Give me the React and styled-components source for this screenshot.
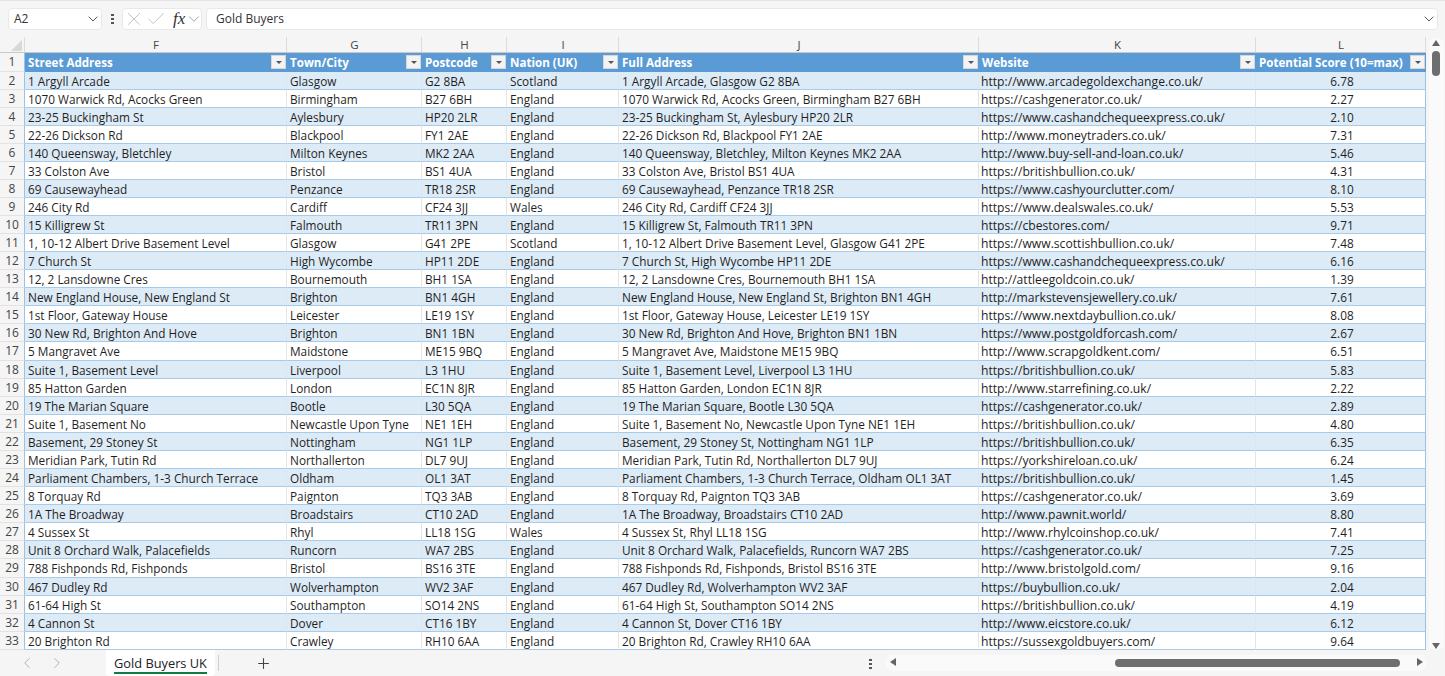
import styled, { createGlobalStyle } from "styled-components";
import { ChevronDown, ChevronLeft, ChevronRight, Check, X, Plus } from "lucide-react";

const GRID_COLS = "262px 135px 85px 112px 360px 277px 170px";
const TALL_ROWS = [1, 17, 29];

const columns = [
  { letter: "F", title: "Street Address" },
  { letter: "G", title: "Town/City" },
  { letter: "H", title: "Postcode" },
  { letter: "I", title: "Nation (UK)" },
  { letter: "J", title: "Full Address" },
  { letter: "K", title: "Website" },
  { letter: "L", title: "Potential Score (10=max)" },
];

const rows = [
  ["1 Argyll Arcade", "Glasgow", "G2 8BA", "Scotland", "1 Argyll Arcade, Glasgow G2 8BA", "http://www.arcadegoldexchange.co.uk/", "6.78"],
  ["1070 Warwick Rd, Acocks Green", "Birmingham", "B27 6BH", "England", "1070 Warwick Rd, Acocks Green, Birmingham B27 6BH", "https://cashgenerator.co.uk/", "2.27"],
  ["23-25 Buckingham St", "Aylesbury", "HP20 2LR", "England", "23-25 Buckingham St, Aylesbury HP20 2LR", "https://www.cashandchequeexpress.co.uk/", "2.10"],
  ["22-26 Dickson Rd", "Blackpool", "FY1 2AE", "England", "22-26 Dickson Rd, Blackpool FY1 2AE", "http://www.moneytraders.co.uk/", "7.31"],
  ["140 Queensway, Bletchley", "Milton Keynes", "MK2 2AA", "England", "140 Queensway, Bletchley, Milton Keynes MK2 2AA", "http://www.buy-sell-and-loan.co.uk/", "5.46"],
  ["33 Colston Ave", "Bristol", "BS1 4UA", "England", "33 Colston Ave, Bristol BS1 4UA", "https://britishbullion.co.uk/", "4.31"],
  ["69 Causewayhead", "Penzance", "TR18 2SR", "England", "69 Causewayhead, Penzance TR18 2SR", "https://www.cashyourclutter.com/", "8.10"],
  ["246 City Rd", "Cardiff", "CF24 3JJ", "Wales", "246 City Rd, Cardiff CF24 3JJ", "https://www.dealswales.co.uk/", "5.53"],
  ["15 Killigrew St", "Falmouth", "TR11 3PN", "England", "15 Killigrew St, Falmouth TR11 3PN", "https://cbestores.com/", "9.71"],
  ["1, 10-12 Albert Drive Basement Level", "Glasgow", "G41 2PE", "Scotland", "1, 10-12 Albert Drive Basement Level, Glasgow G41 2PE", "https://www.scottishbullion.co.uk/", "7.48"],
  ["7 Church St", "High Wycombe", "HP11 2DE", "England", "7 Church St, High Wycombe HP11 2DE", "https://www.cashandchequeexpress.co.uk/", "6.16"],
  ["12, 2 Lansdowne Cres", "Bournemouth", "BH1 1SA", "England", "12, 2 Lansdowne Cres, Bournemouth BH1 1SA", "http://attleegoldcoin.co.uk/", "1.39"],
  ["New England House, New England St", "Brighton", "BN1 4GH", "England", "New England House, New England St, Brighton BN1 4GH", "http://markstevensjewellery.co.uk/", "7.61"],
  ["1st Floor, Gateway House", "Leicester", "LE19 1SY", "England", "1st Floor, Gateway House, Leicester LE19 1SY", "https://www.nextdaybullion.co.uk/", "8.08"],
  ["30 New Rd, Brighton And Hove", "Brighton", "BN1 1BN", "England", "30 New Rd, Brighton And Hove, Brighton BN1 1BN", "https://www.postgoldforcash.com/", "2.67"],
  ["5 Mangravet Ave", "Maidstone", "ME15 9BQ", "England", "5 Mangravet Ave, Maidstone ME15 9BQ", "http://www.scrapgoldkent.com/", "6.51"],
  ["Suite 1, Basement Level", "Liverpool", "L3 1HU", "England", "Suite 1, Basement Level, Liverpool L3 1HU", "https://britishbullion.co.uk/", "5.83"],
  ["85 Hatton Garden", "London", "EC1N 8JR", "England", "85 Hatton Garden, London EC1N 8JR", "http://www.starrefining.co.uk/", "2.22"],
  ["19 The Marian Square", "Bootle", "L30 5QA", "England", "19 The Marian Square, Bootle L30 5QA", "https://cashgenerator.co.uk/", "2.89"],
  ["Suite 1, Basement No", "Newcastle Upon Tyne", "NE1 1EH", "England", "Suite 1, Basement No, Newcastle Upon Tyne NE1 1EH", "https://britishbullion.co.uk/", "4.80"],
  ["Basement, 29 Stoney St", "Nottingham", "NG1 1LP", "England", "Basement, 29 Stoney St, Nottingham NG1 1LP", "https://britishbullion.co.uk/", "6.35"],
  ["Meridian Park, Tutin Rd", "Northallerton", "DL7 9UJ", "England", "Meridian Park, Tutin Rd, Northallerton DL7 9UJ", "https://yorkshireloan.co.uk/", "6.24"],
  ["Parliament Chambers, 1-3 Church Terrace", "Oldham", "OL1 3AT", "England", "Parliament Chambers, 1-3 Church Terrace, Oldham OL1 3AT", "https://britishbullion.co.uk/", "1.45"],
  ["8 Torquay Rd", "Paignton", "TQ3 3AB", "England", "8 Torquay Rd, Paignton TQ3 3AB", "https://cashgenerator.co.uk/", "3.69"],
  ["1A The Broadway", "Broadstairs", "CT10 2AD", "England", "1A The Broadway, Broadstairs CT10 2AD", "http://www.pawnit.world/", "8.80"],
  ["4 Sussex St", "Rhyl", "LL18 1SG", "Wales", "4 Sussex St, Rhyl LL18 1SG", "http://www.rhylcoinshop.co.uk/", "7.41"],
  ["Unit 8 Orchard Walk, Palacefields", "Runcorn", "WA7 2BS", "England", "Unit 8 Orchard Walk, Palacefields, Runcorn WA7 2BS", "https://cashgenerator.co.uk/", "7.25"],
  ["788 Fishponds Rd, Fishponds", "Bristol", "BS16 3TE", "England", "788 Fishponds Rd, Fishponds, Bristol BS16 3TE", "http://www.bristolgold.com/", "9.16"],
  ["467 Dudley Rd", "Wolverhampton", "WV2 3AF", "England", "467 Dudley Rd, Wolverhampton WV2 3AF", "https://buybullion.co.uk/", "2.04"],
  ["61-64 High St", "Southampton", "SO14 2NS", "England", "61-64 High St, Southampton SO14 2NS", "https://britishbullion.co.uk/", "4.19"],
  ["4 Cannon St", "Dover", "CT16 1BY", "England", "4 Cannon St, Dover CT16 1BY", "http://www.eicstore.co.uk/", "6.12"],
  ["20 Brighton Rd", "Crawley", "RH10 6AA", "England", "20 Brighton Rd, Crawley RH10 6AA", "https://sussexgoldbuyers.com/", "9.64"],
];

const GlobalStyle = createGlobalStyle`
  html, body {
    margin: 0;
    padding: 0;
    overflow: hidden;
    background: #f5f5f5;
    font-family: "Open Sans", "Noto Sans", sans-serif;
    color: #222;
  }
  * { box-sizing: border-box; }
`;

const Page = styled.div`
  width: 1445px;
  height: 676px;
  display: flex;
  flex-direction: column;
  overflow: hidden;
`;

const FormulaBar = styled.div`
  height: 37px;
  flex: none;
  display: flex;
  align-items: center;
  gap: 4px;
  padding: 0 7px 1px 8px;
  border-top: 1px solid #e4e4e4;
`;

const Pill = styled.div`
  height: 22px;
  background: #fff;
  border: 1px solid #e8e8e8;
  border-radius: 4px;
  display: flex;
  align-items: center;
  font-size: 12px;
  color: #333;

  svg {
    flex: none;
  }
`;

const NameBox = styled(Pill)`
  width: 94px;
  padding: 0 0 0 5px;
  justify-content: space-between;
`;

const FxBox = styled(Pill)`
  width: 80px;
  color: #bdbdbd;
`;

const FxLabel = styled.span`
  font-family: "Liberation Serif", serif;
  font-style: italic;
  font-size: 17px;
  width: 14px;
  margin-left: 6px;
  color: #333;
`;

const FormulaInput = styled(Pill)`
  flex: 1;
  padding: 0 0 0 9px;
  justify-content: space-between;
`;

const Dots = styled.span`
  width: 3px;
  height: 11px;
  flex: none;
  margin: ${(p) => (p.$bar ? "0 4px 0 5px" : "0 1px")};
  background: radial-gradient(circle, #555 1.2px, transparent 1.4px) 0 0 / 3px 4px repeat-y;
`;

const SheetArea = styled.div`
  flex: 1;
  display: flex;
  min-height: 0;
`;

const GridWrap = styled.div`
  width: 1426px;
  flex: none;
  display: flex;
  flex-direction: column;
  overflow: hidden;
`;

const HeaderRow = styled.div`
  display: grid;
  grid-template-columns: 25px ${GRID_COLS};
  height: 16px;
  flex: none;
  border-bottom: 1px solid #c8c8c8;
`;

const Corner = styled.div`
  position: relative;
  border-right: 1px solid #dcdcdc;
  &::after {
    content: "";
    position: absolute;
    right: 2px;
    bottom: 1px;
    border-style: solid;
    border-width: 0 0 11px 11px;
    border-color: transparent transparent #d8d8d8 transparent;
  }
`;

const ColLetter = styled.div`
  border-right: 1px solid #dcdcdc;
  text-align: center;
  font-size: 11.5px;
  line-height: 15px;
  padding-left: 1px;
  color: #444;
`;

const Row = styled.div`
  display: grid;
  grid-template-columns: 25px ${GRID_COLS};
  grid-template-rows: 100%;
  height: ${(p) => (p.$tall ? 19 : 18)}px;
  flex: none;
`;

const RowNum = styled.div`
  border-right: 1px solid #9bc2e6;
  border-bottom: 1px solid #e2e2e2;
  text-align: center;
  font-size: 12px;
  line-height: 17px;
  color: #444;
`;

const Cell = styled.div`
  background: ${(p) => (p.$band ? "#ddebf7" : "#fff")};
  border-bottom: 1px solid #a9cbea;
  border-right: 1px solid ${(p) => (p.$band ? "#d9e7f3" : "#e4e4e4")};
  padding: 2px 0 0 ${(p) => (p.$link ? 2 : 3)}px;
  font-size: ${(p) => (p.$link ? 12.15 : 11.8)}px;
  line-height: 15px;
  white-space: nowrap;
  overflow: hidden;
  color: #1f1f1f;
  text-align: ${(p) => (p.$center ? "center" : "left")};
  &:last-child {
    border-right: 1px solid #9bc2e6;
  }
`;

const HeadCell = styled.div`
  position: relative;
  background: #5b9bd5;
  color: #fff;
  font-weight: 700;
  font-size: 11.6px;
  line-height: 17px;
  padding: 1px 0 0 3px;
  white-space: nowrap;
  overflow: hidden;
`;

const FilterBtn = styled.span`
  position: absolute;
  right: 1px;
  top: 2px;
  width: 15px;
  height: 14px;
  background: #f3f3f3;
  border: 1px solid #d6d6d6;
  &::after {
    content: "";
    position: absolute;
    left: 4px;
    top: 5px;
    border-style: solid;
    border-width: 3px 3px 0 3px;
    border-color: #555 transparent transparent transparent;
  }
`;

const VScroll = styled.div`
  flex: 1;
  position: relative;
  background: #f5f5f5;
`;

const VTrack = styled.div`
  position: absolute;
  top: 1px;
  bottom: 0;
  left: 3px;
  right: 1px;
  background: #fafafa;
  border-radius: 6px;
`;

const VThumb = styled.div`
  position: absolute;
  top: 14px;
  left: 6px;
  width: 8px;
  height: 25px;
  background: #6e6e6e;
  border-radius: 4px;
`;

const Arrow = styled.span`
  position: absolute;
  left: 6px;
  ${(p) => (p.$down ? "bottom: 1px;" : "top: 3px;")}
  border-style: solid;
  border-width: ${(p) => (p.$down ? "6px 4.5px 0 4.5px" : "0 4.5px 6px 4.5px")};
  border-color: ${(p) =>
    p.$down ? "#666 transparent transparent transparent" : "transparent transparent #666 transparent"};
`;

const TabBar = styled.div`
  height: 26px;
  flex: none;
  display: flex;
  align-items: center;
  background: #f5f5f5;
`;

const TabNav = styled.div`
  width: 106px;
  display: flex;
  align-items: center;
  gap: 12px;
  padding-left: 18px;
  color: #a8a8a8;
`;

const Tab = styled.div`
  height: 26px;
  width: 109px;
  background: #fff;
  border-radius: 0 0 4px 4px;
  font-size: 12.8px;
  color: #222;
  text-align: center;
  line-height: 26px;
  position: relative;
  &::after {
    content: "";
    position: absolute;
    left: 8px;
    right: 8px;
    bottom: 2px;
    height: 2px;
    background: #107c41;
  }
`;

const TabDivider = styled.span`
  width: 1px;
  height: 16px;
  margin-left: 3px;
  background: #d0d0d0;
`;

const AddTab = styled.span`
  margin-left: 36px;
  display: flex;
  color: #444;
`;

const HScrollZone = styled.div`
  margin-left: auto;
  display: flex;
  align-items: center;
  width: 577px;
  height: 26px;
  gap: 12px;
`;

const HTrack = styled.div`
  position: relative;
  width: 542px;
  height: 16px;
  background: #fafafa;
  border-radius: 8px;
`;

const HThumb = styled.div`
  position: absolute;
  left: 230px;
  top: 4px;
  width: 285px;
  height: 8px;
  background: #6e6e6e;
  border-radius: 4px;
`;

const HArrow = styled.span`
  position: absolute;
  top: 3px;
  ${(p) => (p.$right ? "right: 4px;" : "left: 5px;")}
  border-style: solid;
  border-width: ${(p) => (p.$right ? "4.5px 0 4.5px 6px" : "4.5px 6px 4.5px 0")};
  border-color: ${(p) =>
    p.$right ? "transparent transparent transparent #666" : "transparent #666 transparent transparent"};
`;

function App() {
  return (
    <Page>
      <GlobalStyle />
      <FormulaBar>
        <NameBox>
          A2
          <ChevronDown size={16} color="#555" strokeWidth={1.5} />
        </NameBox>
        <Dots $bar />
        <FxBox>
          <X size={22} strokeWidth={1} />
          <Check size={22} strokeWidth={1} />
          <FxLabel>fx</FxLabel>
          <ChevronDown size={18} color="#999" strokeWidth={1.2} />
        </FxBox>
        <FormulaInput>
          Gold Buyers
          <ChevronDown size={16} color="#555" strokeWidth={1.5} />
        </FormulaInput>
      </FormulaBar>
      <SheetArea>
        <GridWrap>
          <HeaderRow>
            <Corner />
            {columns.map((c) => (
              <ColLetter key={c.letter}>{c.letter}</ColLetter>
            ))}
          </HeaderRow>
          <Row $tall={TALL_ROWS.includes(1)}>
            <RowNum>1</RowNum>
            {columns.map((c) => (
              <HeadCell key={c.letter}>
                {c.title}
                <FilterBtn />
              </HeadCell>
            ))}
          </Row>
          {rows.map((r, i) => (
            <Row key={i} $tall={TALL_ROWS.includes(i + 2)}>
              <RowNum>{i + 2}</RowNum>
              {r.map((v, j) => (
                <Cell key={j} $band={i % 2 === 0} $center={j === 6} $link={j === 5}>
                  {v}
                </Cell>
              ))}
            </Row>
          ))}
        </GridWrap>
        <VScroll>
          <VTrack />
          <Arrow />
          <VThumb />
          <Arrow $down />
        </VScroll>
      </SheetArea>
      <TabBar>
        <TabNav>
          <ChevronLeft size={18} strokeWidth={1.2} />
          <ChevronRight size={18} strokeWidth={1.2} />
        </TabNav>
        <Tab>Gold Buyers UK</Tab>
        <TabDivider />
        <AddTab>
          <Plus size={17} strokeWidth={1.5} />
        </AddTab>
        <HScrollZone>
          <Dots />
          <HTrack>
            <HArrow />
            <HThumb />
            <HArrow $right />
          </HTrack>
        </HScrollZone>
      </TabBar>
    </Page>
  );
}

export default App;
